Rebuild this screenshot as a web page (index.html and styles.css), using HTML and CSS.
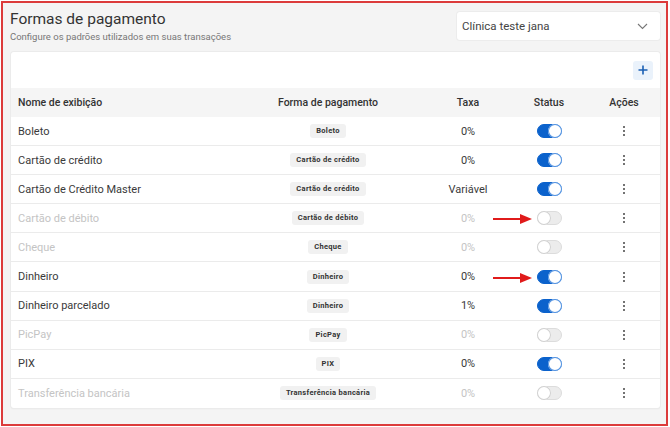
FILE: index.html
```html
<!DOCTYPE html>
<html lang="pt-BR">
<head>
  <meta charset="UTF-8" />
  <meta name="viewport" content="width=device-width, initial-scale=1.0"/>
  <title>Formas de pagamento</title>
  <link rel="stylesheet" href="styles.css">
</head>
<body>
  <div class="frame">
    <div class="top">
      <div class="titles">
        <h1>Formas de pagamento</h1>
        <p class="subtitle">Configure os padrões utilizados em suas transações</p>
      </div>
      <div class="select">
        <span>Clínica teste jana</span>
        <svg width="11" height="7" viewBox="0 0 11 7"><path d="M1 1l4.5 4.5L10 1" fill="none" stroke="#777" stroke-width="1.1"/></svg>
      </div>
    </div>

    <div class="card">
      <div class="toolbar">
        <button class="add">
          <svg width="10" height="10" viewBox="0 0 10 10"><path d="M5 0.5v9M0.5 5h9" stroke="#1a5fb4" stroke-width="1.6"/></svg>
        </button>
      </div>

      <div class="row head">
        <div class="c-name">Nome de exibição</div>
        <div class="c-mid">Forma de pagamento</div>
        <div class="c-mid">Taxa</div>
        <div class="c-mid">Status</div>
        <div class="c-mid">Ações</div>
      </div>

      <div class="row">
        <div class="c-name">Boleto</div>
        <div class="c-mid"><span class="chip">Boleto</span></div>
        <div class="c-mid">0%</div>
        <div class="c-mid"><span class="toggle on"></span></div>
        <div class="c-mid"><span class="dots"><i></i><i></i><i></i></span></div>
      </div>
      <div class="row">
        <div class="c-name">Cartão de crédito</div>
        <div class="c-mid"><span class="chip">Cartão de crédito</span></div>
        <div class="c-mid">0%</div>
        <div class="c-mid"><span class="toggle on"></span></div>
        <div class="c-mid"><span class="dots"><i></i><i></i><i></i></span></div>
      </div>
      <div class="row">
        <div class="c-name">Cartão de Crédito Master</div>
        <div class="c-mid"><span class="chip">Cartão de crédito</span></div>
        <div class="c-mid">Variável</div>
        <div class="c-mid"><span class="toggle on"></span></div>
        <div class="c-mid"><span class="dots"><i></i><i></i><i></i></span></div>
      </div>
      <div class="row off">
        <div class="c-name">Cartão de débito</div>
        <div class="c-mid"><span class="chip">Cartão de débito</span></div>
        <div class="c-mid">0%</div>
        <div class="c-mid"><span class="toggle"><svg class="arrow" width="40" height="12" viewBox="0 0 40 12"><path d="M0 6h29" stroke="#e01b1b" stroke-width="2"/><path d="M27 1l12 5-12 5z" fill="#e01b1b"/></svg></span></div>
        <div class="c-mid"><span class="dots"><i></i><i></i><i></i></span></div>
      </div>
      <div class="row off">
        <div class="c-name">Cheque</div>
        <div class="c-mid"><span class="chip">Cheque</span></div>
        <div class="c-mid">0%</div>
        <div class="c-mid"><span class="toggle"></span></div>
        <div class="c-mid"><span class="dots"><i></i><i></i><i></i></span></div>
      </div>
      <div class="row">
        <div class="c-name">Dinheiro</div>
        <div class="c-mid"><span class="chip">Dinheiro</span></div>
        <div class="c-mid">0%</div>
        <div class="c-mid"><span class="toggle on"><svg class="arrow" width="40" height="12" viewBox="0 0 40 12"><path d="M0 6h29" stroke="#e01b1b" stroke-width="2"/><path d="M27 1l12 5-12 5z" fill="#e01b1b"/></svg></span></div>
        <div class="c-mid"><span class="dots"><i></i><i></i><i></i></span></div>
      </div>
      <div class="row">
        <div class="c-name">Dinheiro parcelado</div>
        <div class="c-mid"><span class="chip">Dinheiro</span></div>
        <div class="c-mid">1%</div>
        <div class="c-mid"><span class="toggle on"></span></div>
        <div class="c-mid"><span class="dots"><i></i><i></i><i></i></span></div>
      </div>
      <div class="row off">
        <div class="c-name">PicPay</div>
        <div class="c-mid"><span class="chip">PicPay</span></div>
        <div class="c-mid">0%</div>
        <div class="c-mid"><span class="toggle"></span></div>
        <div class="c-mid"><span class="dots"><i></i><i></i><i></i></span></div>
      </div>
      <div class="row">
        <div class="c-name">PIX</div>
        <div class="c-mid"><span class="chip">PIX</span></div>
        <div class="c-mid">0%</div>
        <div class="c-mid"><span class="toggle on"></span></div>
        <div class="c-mid"><span class="dots"><i></i><i></i><i></i></span></div>
      </div>
      <div class="row off last">
        <div class="c-name">Transferência bancária</div>
        <div class="c-mid"><span class="chip">Transferência bancária</span></div>
        <div class="c-mid">0%</div>
        <div class="c-mid"><span class="toggle"></span></div>
        <div class="c-mid"><span class="dots"><i></i><i></i><i></i></span></div>
      </div>
    </div>
  </div>
</body>
</html>
```

FILE: styles.css
```css
* {
  box-sizing: border-box;
}

body {
  margin: 0;
  background: #fff;
  font-family: Roboto, 'Liberation Sans', sans-serif;
  color: #333;
}

.frame {
  margin: 1px 0 0 1px;
  width: 667px;
  height: 425px;
  border: 2px solid #dc3b3b;
  background: #f4f4f4;
  padding: 0 6px 0 8px;
}

.top {
  height: 49px;
  padding-top: 6px;
  display: flex;
  justify-content: space-between;
  align-items: flex-start;
}

h1 {
  margin: 0 0 0 -1px;
  font-size: 15.5px;
  line-height: 20px;
  font-weight: 400;
  color: #333;
}

.subtitle {
  margin: 2px 0 0 -1px;
  font-size: 9.5px;
  line-height: 12px;
  color: #777;
}

.select {
  margin-top: 3px;
  width: 203px;
  height: 28px;
  background: #fff;
  border-radius: 3px;
  box-shadow: 0 0 0 1px #ececec;
  display: flex;
  align-items: center;
  justify-content: space-between;
  padding: 0 12px 0 5px;
  font-size: 11.5px;
  color: #444;
}

.card {
  background: #fff;
  border-radius: 3px;
  box-shadow: 0 0 0 1px #ebebeb, 0 1px 2px rgba(0, 0, 0, 0.06);
}

.toolbar {
  height: 36px;
  display: flex;
  justify-content: flex-end;
  align-items: center;
  padding-right: 7px;
}

.add {
  width: 20px;
  height: 19px;
  border: none;
  border-radius: 3px;
  background: #eaf2fb;
  padding: 0;
  display: flex;
  align-items: center;
  justify-content: center;
}

.row {
  display: grid;
  grid-template-columns: 219px 196px 84px 78px 72px;
  height: 29.1px;
  align-items: center;
  border-bottom: 1px solid #ebebeb;
  font-size: 11px;
  color: #3a3a3a;
}

.row.head {
  height: 29px;
  background: #f5f5f5;
  border-bottom: none;
  font-weight: 500;
  font-size: 10.5px;
  color: #333;
}

.row.last {
  border-bottom: none;
}

.row.off {
  color: #c4c4c4;
}

.c-name {
  padding-left: 7px;
}

.c-mid {
  display: flex;
  justify-content: center;
  align-items: center;
}

.chip {
  background: #f1f1f1;
  border-radius: 3px;
  padding: 2px 6px;
  font-size: 7.5px;
  line-height: 10px;
  font-weight: 700;
  letter-spacing: 0.3px;
  color: #333;
}

.toggle {
  position: relative;
  width: 25px;
  height: 14px;
  border-radius: 7px;
  background: #ececec;
  border: 1px solid #dcdcdc;
}

.toggle::after {
  content: "";
  position: absolute;
  top: -1px;
  left: -1px;
  width: 14px;
  height: 14px;
  border-radius: 50%;
  background: #fff;
  box-shadow: 0 0 0 1px #d0d0d0 inset;
}

.toggle.on {
  background: #0b62cc;
  border-color: #0b62cc;
}

.toggle.on::after {
  left: auto;
  right: -1px;
  box-shadow: 0 0 0 1px #4d8fe0 inset;
}

.arrow {
  position: absolute;
  right: calc(100% + 5px);
  top: 1px;
}

.dots {
  display: flex;
  flex-direction: column;
  gap: 2px;
}

.dots i {
  width: 2px;
  height: 2px;
  background: #444;
  border-radius: 50%;
}
```
